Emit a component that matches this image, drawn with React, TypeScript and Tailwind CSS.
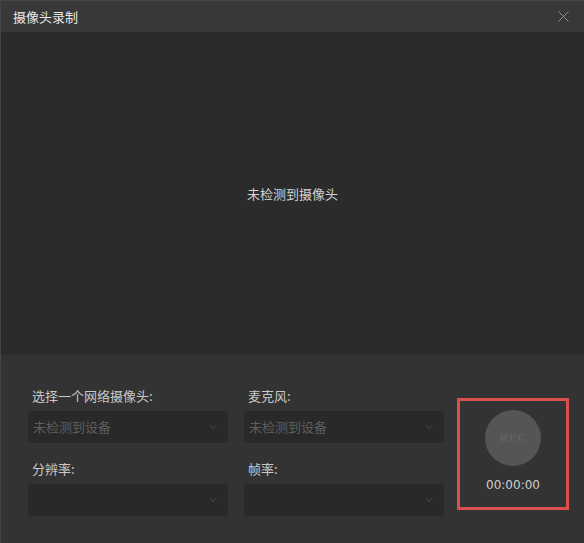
import { ChevronDown, X } from 'lucide-react';

const font = { fontFamily: '"Microsoft YaHei", "Noto Sans CJK SC", "Liberation Sans", sans-serif' };

function Select({ placeholder }: { placeholder?: string }) {
  return (
    <div className="flex h-[32px] w-[200px] items-center justify-between rounded-[4px] bg-[#292929] pl-[5px] pr-[9px]">
      <span className="text-[13px] text-[#5f5f5f]">{placeholder ?? ''}</span>
      <ChevronDown className="h-[12px] w-[12px] text-[#5a5a5a]" strokeWidth={1.5} />
    </div>
  );
}

function Field({ label, placeholder }: { label: string; placeholder?: string }) {
  return (
    <div className="flex flex-col">
      <span className="mb-[6px] pl-[4px] text-[13px] leading-[18px] text-[#c8c8c8]">{label}</span>
      <Select placeholder={placeholder} />
    </div>
  );
}

export default function App() {
  return (
    <div
      className="flex h-[543px] w-[584px] flex-col border-l border-t border-[#454545] bg-[#333333]"
      style={font}
    >
      {/* Title bar */}
      <div className="flex h-[31px] items-center justify-between bg-[#383838] pl-[12px] pr-[11px]">
        <span className="text-[13px] text-[#e6e6e6]">摄像头录制</span>
        <X className="h-[19px] w-[19px] text-[#9a9a9a]" strokeWidth={1.1} />
      </div>

      {/* Preview */}
      <div className="flex h-[323px] items-center justify-center bg-[#2b2b2b]">
        <span className="text-[13px] text-[#d2d2d2]">未检测到摄像头</span>
      </div>

      {/* Controls */}
      <div className="flex flex-1 items-start pl-[27px] pt-[32px]">
        <div className="grid grid-cols-[200px_200px] content-start gap-x-[16px] gap-y-[17px]">
          <Field label="选择一个网络摄像头:" placeholder="未检测到设备" />
          <Field label="麦克风:" placeholder="未检测到设备" />
          <Field label="分辨率:" />
          <Field label="帧率:" />
        </div>
        <div className="ml-[13px] mt-[11px] flex h-[112px] w-[112px] flex-col items-center border-[3px] border-[#d9504c]">
          <div className="mt-[9px] flex h-[56px] w-[56px] items-center justify-center rounded-full bg-[#555555]">
            <span
              className="text-[13px] font-bold text-[#606060]"
              style={{ fontFamily: '"Liberation Serif", serif' }}
            >
              REC
            </span>
          </div>
          <span
            className="mt-[10px] text-[12px] text-[#d0d0d0]"
            style={{ fontFamily: '"DejaVu Sans", sans-serif' }}
          >
            00:00:00
          </span>
        </div>
      </div>
    </div>
  );
}
